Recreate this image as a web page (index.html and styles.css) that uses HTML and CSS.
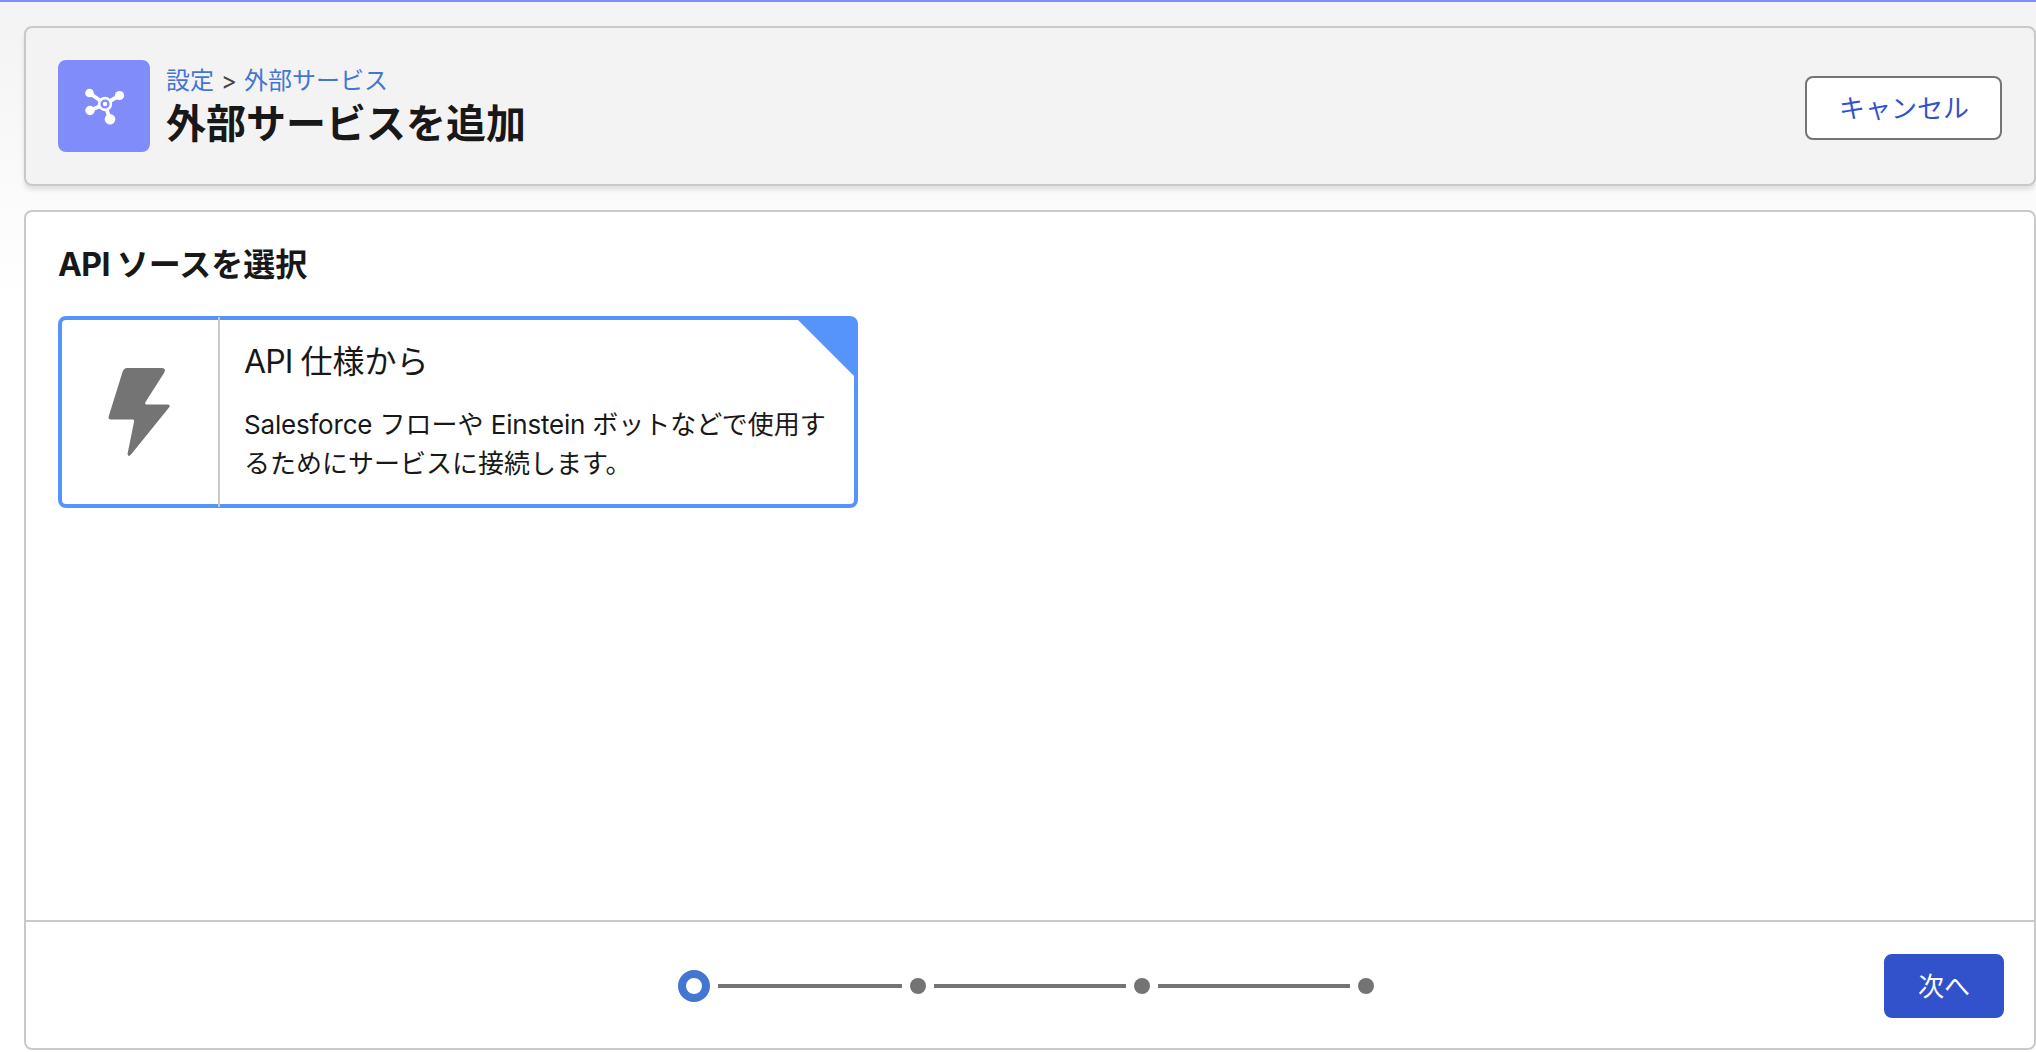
FILE: index.html
```html
<!DOCTYPE html>
<html lang="ja">
<head>
    <meta charset="UTF-8">
    <meta name="viewport" content="width=device-width, initial-scale=1.0">
    <title>外部サービスを追加</title>
    <link rel="stylesheet" href="styles.css">
</head>
<body>
    <header class="page-header">
        <div class="header-icon">
            <svg viewBox="0 0 92 92" width="92" height="92">
                <g stroke="#fff" stroke-width="3.8" stroke-linecap="round">
                    <path d="M31.500 33L47 44M61.500 35.500L47 44M32 50.500L47 44M52 59.500L47 44"/>
                </g>
                <g fill="#fff">
                    <circle cx="31.500" cy="33" r="4.300"/>
                    <circle cx="61.500" cy="35.500" r="4.600"/>
                    <circle cx="32" cy="50.500" r="4.700"/>
                    <circle cx="52" cy="59.300" r="5.300"/>
                    <circle cx="47" cy="44" r="7.200"/>
                </g>
                <circle cx="47" cy="44" r="3.400" fill="none" stroke="#7f8cf9" stroke-width="2.400"/>
            </svg>
        </div>
        <div class="header-text">
            <nav class="breadcrumb"><a href="#">設定</a><span>&gt;</span><a href="#">外部サービス</a></nav>
            <h1>外部サービスを追加</h1>
        </div>
        <button class="btn btn-neutral">キャンセル</button>
    </header>

    <main class="wizard">
        <section class="wizard-body">
            <h2><span class="latin">API </span>ソースを選択</h2>
            <div class="option selected">
                <div class="option-icon">
                    <svg viewBox="0 0 64 92" width="64" height="92">
                        <path fill="#747474" d="M20 2H54Q60 2 57 7L38.500 36Q37.500 38.500 39.500 38.500H60.500Q64 38.500 62 41.500L24 88.500Q21.500 91.500 20.500 88L27 56Q27.500 53.500 26 53.500H4Q.8 53.500 1.800 50L15.500 6Q17 2 20 2Z"/>
                    </svg>
                </div>
                <div class="option-text">
                    <h3><span class="latin">API </span>仕様から</h3>
                    <p><span class="latin">Salesforce </span>フローや <span class="latin">Einstein </span>ボットなどで使用するためにサービスに接続します。</p>
                </div>
            </div>
        </section>
        <footer class="wizard-footer">
            <div class="progress">
                <span class="step active"></span>
                <span class="line"></span>
                <span class="step"></span>
                <span class="line"></span>
                <span class="step"></span>
                <span class="line"></span>
                <span class="step"></span>
            </div>
            <button class="btn btn-brand">次へ</button>
        </footer>
    </main>
</body>
</html>
```
FILE: styles.css
```css
* {
    box-sizing: border-box;
}
body {
    margin: 0;
    height: 1052px;
    padding: 24px 0 2px 24px;
    border-top: 2px solid #7f8cff;
    background: linear-gradient(#f3f3f3, #fff 300px);
    color: #181818;
    font-family: Inter, "Noto Sans CJK JP", sans-serif;
    display: flex;
    flex-direction: column;
    gap: 24px;
    overflow: hidden;
}
h1, h2, h3, p {
    margin: 0;
}
.page-header {
    height: 160px;
    flex: none;
    display: flex;
    align-items: flex-start;
    padding: 32px;
    background: #f3f3f3;
    border: 2px solid #c9c9c9;
    border-radius: 8px;
    box-shadow: 0 4px 4px rgba(0, 0, 0, 0.1);
}
.header-icon {
    width: 92px;
    height: 92px;
    background: #7f8cf9;
    border-radius: 8px;
}
.header-text {
    margin-left: 16px;
    padding-top: 3px;
    flex: 1;
}
.breadcrumb {
    display: flex;
    gap: 7px;
    font-size: 24px;
    line-height: 36px;
    color: #444;
}
.breadcrumb a {
    color: #4375d3;
    text-decoration: none;
}
h1 {
    font-size: 40px;
    line-height: 50px;
    font-weight: 700;
}
.btn {
    height: 64px;
    border-radius: 8px;
    font-family: inherit;
    font-size: 26px;
    line-height: 60px;
    padding: 1px 32px 0;
    white-space: nowrap;
}
.btn-neutral {
    width: 197px;
    margin-top: 16px;
    background: #fff;
    border: 2px solid #747474;
    color: #3252cb;
}
.btn-brand {
    width: 120px;
    background: #3252cb;
    border: 2px solid #3252cb;
    color: #fff;
}
.wizard {
    flex: 1;
    display: flex;
    flex-direction: column;
    background: #fff;
    border: 2px solid #c9c9c9;
    border-radius: 8px;
}
.wizard-body {
    flex: 1;
    padding: 29px 32px 28px;
}
h2 {
    font-size: 32px;
    line-height: 48px;
    font-weight: 700;
}
h2 .latin {
    letter-spacing: -0.6px;
}
.option {
    position: relative;
    display: flex;
    width: 800px;
    height: 192px;
    margin-top: 27px;
    border: 4px solid #5693fb;
    border-radius: 8px;
}
.option.selected::after {
    content: "";
    position: absolute;
    top: 0;
    right: 0;
    border-top: 56px solid #5693fb;
    border-left: 56px solid transparent;
}
.option-icon {
    width: 158px;
    margin: -3px 0;
    padding-right: 2px;
    display: flex;
    align-items: center;
    justify-content: center;
    border-right: 2px solid #c9c9c9;
}
.option-text {
    flex: 1;
    padding: 18px 24px 0 24px;
}
h3 {
    font-size: 32px;
    line-height: 48px;
    font-weight: 400;
}
h3 .latin {
    letter-spacing: -0.9px;
}
.option-text p {
    margin-top: 19px;
    font-size: 26px;
    line-height: 39px;
}
.option-text p .latin {
    letter-spacing: -0.2px;
}
.wizard-footer {
    height: 128px;
    display: flex;
    align-items: center;
    justify-content: space-between;
    padding: 2px 30px 0 652px;
    border-top: 2px solid #c9c9c9;
}
.progress {
    display: flex;
    align-items: center;
    gap: 8px;
    width: 696px;
}
.step {
    width: 16px;
    height: 16px;
    border-radius: 50%;
    background: #747474;
}
.step.active {
    width: 32px;
    height: 32px;
    background: #fff;
    border: 8px solid #4375d3;
}
.line {
    width: 192px;
    height: 4px;
    background: #747474;
}
.step.active + .line {
    width: 184px;
}
```
